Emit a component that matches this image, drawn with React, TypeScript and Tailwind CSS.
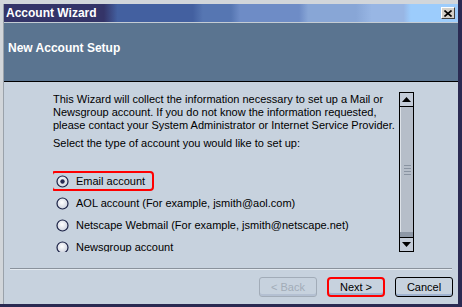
import React from "react";

const font = { fontFamily: '"Liberation Sans", Arial, sans-serif' };

function Radio({ checked }: { checked?: boolean }) {
  return (
    <svg width="13" height="13" viewBox="0 0 13 13" className="shrink-0">
      <defs>
        <radialGradient id="rg" cx="0.45" cy="0.4" r="0.7">
          <stop offset="0" stopColor="#ffffff" />
          <stop offset="1" stopColor="#c4cad8" />
        </radialGradient>
      </defs>
      <circle cx="6.5" cy="6.5" r="5.5" fill="url(#rg)" stroke="#1c2246" strokeWidth="1.2" />
      {checked && <circle cx="6.5" cy="6.5" r="2.2" fill="#262a52" />}
    </svg>
  );
}

function Scrollbar() {
  return (
    <div className="w-[15px] h-[160px] border border-black flex flex-col bg-[#8e98a6] shrink-0">
      <div className="h-[14px] bg-[#c4ccd8] border-b border-black flex items-center justify-center">
        <svg width="9" height="5" viewBox="0 0 9 5">
          <polygon points="4.5,0 9,5 0,5" fill="#000" />
        </svg>
      </div>
      <div className="h-[125px] bg-[#b6bec9] border-l border-[#dde2e8] flex flex-col items-center justify-center gap-[2px]">
        <div className="w-[7px] h-[1px] bg-[#8a94a2]" />
        <div className="w-[7px] h-[1px] bg-[#8a94a2]" />
        <div className="w-[7px] h-[1px] bg-[#8a94a2]" />
        <div className="w-[7px] h-[1px] bg-[#8a94a2]" />
      </div>
      <div className="flex-1" />
      <div className="h-[14px] bg-[#c4ccd8] border-t border-black flex items-center justify-center">
        <svg width="9" height="5" viewBox="0 0 9 5">
          <polygon points="0,0 9,0 4.5,5" fill="#000" />
        </svg>
      </div>
    </div>
  );
}

export default function App() {
  return (
    <div
      className="w-[462px] h-[307px] bg-[#d2d6da] flex flex-col pt-[4px] pl-[3px] border-r-4 border-b-[3px] border-[#2a2a52] overflow-hidden"
      style={font}
    >
      <div className="border-l border-[#9aa2aa] flex flex-col flex-1">
        {/* Title bar */}
        <div className="h-[18px] flex items-center justify-between pl-[2px] pr-[3px] bg-[linear-gradient(to_right,#343468_0%,#343468_22%,#4360a0_25%,#4360a0_41.6%,#5676b2_43.8%,#5676b2_50%,#6e8cc6_52%,#6e8cc6_65%,#88a6d6_67%,#88a6d6_77.5%,#98b6e4_81%,#98b6e4_88%,#9cccfc_89.6%,#9cccfc_100%)]">
          <span className="text-white font-bold text-[12px] leading-none">Account Wizard</span>
          <div className="w-[14px] h-[12px] bg-[#d4d0c8] border border-t-white border-l-white border-r-[#404040] border-b-[#404040] flex items-center justify-center">
            <svg width="8" height="7" viewBox="0 0 8 7">
              <path d="M0.5 0.5 L7.5 6.5 M7.5 0.5 L0.5 6.5" stroke="#000" strokeWidth="1.6" />
            </svg>
          </div>
        </div>
        <div className="h-[1px] bg-[#c4ccd4]" />
        {/* Header */}
        <div className="h-[59px] bg-[#5a7490] border-b border-black pl-[4px] pt-[12px]">
          <span className="text-white font-bold text-[12px] leading-none">New Account Setup</span>
        </div>
        {/* Body */}
        <div className="flex-1 bg-[#c7d2de] flex flex-col">
          <div className="flex pt-[10px] pl-[49px]">
            <div className="w-[346px] h-[160px] overflow-hidden text-[11px] text-black">
              <p className="leading-[13px] pt-[1px] whitespace-nowrap">
                This Wizard will collect the information necessary to set up a Mail or
                <br />
                Newsgroup account. If you do not know the information requested,
                <br />
                please contact your System Administrator or Internet Service Provider.
              </p>
              <p className="leading-[13px] mt-[5px] whitespace-nowrap">
                Select the type of account you would like to set up:
              </p>
              <div className="mt-[20px] flex flex-col">
                <div className="h-[22px] flex items-center">
                  <div className="-ml-[2px] h-[20px] border-2 border-[#ff0000] rounded-[4px] flex items-center gap-[7px] pl-[3px] pr-[7px]">
                    <Radio checked />
                    <span>Email account</span>
                  </div>
                </div>
                <div className="h-[22px] flex items-center gap-[7px] pl-[3px]">
                  <Radio />
                  <span>AOL account (For example, jsmith@aol.com)</span>
                </div>
                <div className="h-[22px] flex items-center gap-[7px] pl-[3px]">
                  <Radio />
                  <span>Netscape Webmail (For example, jsmith@netscape.net)</span>
                </div>
                <div className="h-[22px] flex items-center gap-[7px] pl-[3px]">
                  <Radio />
                  <span>Newsgroup account</span>
                </div>
              </div>
            </div>
            <Scrollbar />
          </div>
          <div className="mt-[16px] ml-[6px] mr-[6px] h-[2px] border-t border-[#8a929c] border-b border-b-[#e4eaf0]" />
          <div className="flex justify-end gap-[10px] pr-[5px] mt-[7px] text-[11px]">
            <div className="w-[58px] h-[20px] rounded-[3px] border border-[#a2acb8] bg-[#c7d2de] flex items-center justify-center text-[#a2acb8] shadow-[inset_0_-2px_0_#b4c0d2]">
              &lt; Back
            </div>
            <div className="w-[58px] h-[20px] rounded-[4px] border-2 border-[#ff0000] bg-[#c7d2de] flex items-center justify-center text-black shadow-[inset_0_-2px_0_#9fb2d0]">
              Next &gt;
            </div>
            <div className="w-[58px] h-[20px] rounded-[3px] border border-black bg-[#c7d2de] flex items-center justify-center text-black shadow-[inset_0_-2px_0_#9fb2d0]">
              Cancel
            </div>
          </div>
        </div>
      </div>
    </div>
  );
}
